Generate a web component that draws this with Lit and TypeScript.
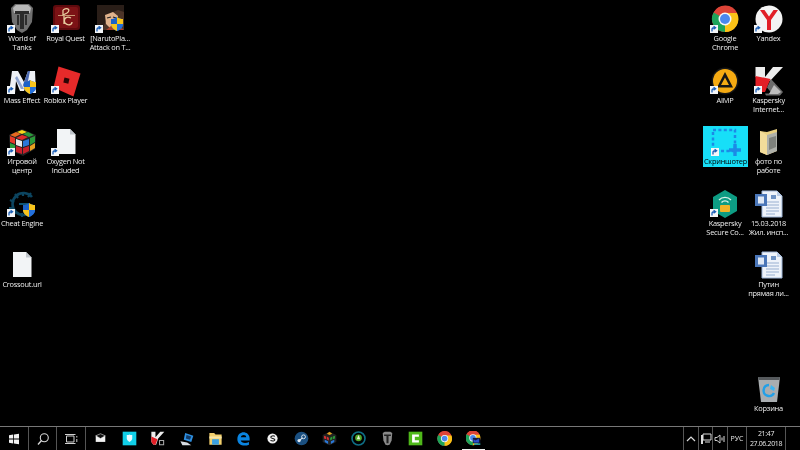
import { LitElement, html, css, svg } from "lit";
import { customElement } from "lit/decorators.js";

const shield = (x: number, y: number, s = 1) => svg`<g transform="translate(${x} ${y}) scale(${s})">
  <path d="M6 0C4 1.600 2 2 0 2v5c0 3.400 2.600 5.600 6 7 3.400-1.400 6-3.600 6-7V2c-2 0-4-.4-6-2z" fill="#1c62c8"/>
  <path d="M6 0c2 1.600 4 2 6 2v5H6z" fill="#f8c41c"/><path d="M6 7H0c0 3.400 2.600 5.600 6 7z" fill="#f8c41c"/>
  <path d="M6 7h6c0 3.400-2.600 5.600-6 7z" fill="#2470dc"/></g>`;

const wot = svg`<path d="M5 5 9 1h14l4 4-1 14-5 8-5 3-5-3-5-8z" fill="#6f6f6f"/><path d="M7 5l3-3h12l3 3-1 5H8z" fill="#b8b8b8"/>
  <path d="M9 8h14v3h-5v15h-4V11H9z" fill="#2a2a2a"/><path d="M11 12h2v10h-2zM19 12h2v10h-2z" fill="#2c2c2c"/>`;
const royal = svg`<rect x="3" y="2" width="27" height="25" rx="3" fill="#5e0a0d"/><rect x="5" y="4" width="23" height="21" rx="2" fill="#7c1215"/>
  <path d="M13 7c5-3 8 0 4 3l-4 2V7M14 13v8M21 15c-4-2-8 0-6 5 3 3 7 2 7-1" fill="none" stroke="#e8cda0" stroke-width="1.300"/><path d="M8 12.500h17" stroke="#d8b888" stroke-width=".8"/>`;
const naruto = svg`<rect x="3" y="2" width="27" height="25" fill="#4c3428"/><path d="M3 2h27v7l-6-2-7 3-6 10-3 7H3z" fill="#2a1e18"/>
  <path d="M11 12l8-3 5 4-1 8-6 5-5-5z" fill="#e0b28c"/><path d="M13 15l4-1M19 14l3 1" stroke="#222" stroke-width="1.200"/><path d="M17 23l6-2 7 6H12z" fill="#a8402a"/>${shield(17, 14)}`;
const mass = svg`<path d="M3 28 6 6h6l6 11 4-11h7l1 22h-7l-1-11-4 9h-4L10 16 9 28z" fill="#eef1f6"/><path d="M17 20l5-14h2l-3 15-2 4z" fill="#4a68b0"/><path d="M9 13l6 11h3l-7-13z" fill="#8ea4d0"/>${shield(18, 15)}`;
const roblox = svg`<path d="M8.500 1.400 30.500 8.400 23.500 31.400 3.500 22.400z" fill="#e62a2a"/><path d="M14.500 12.500l5 1.200-1.200 5-5-1.200z" fill="#2a0505"/>`;
const cube = svg`<path d="M16 3 30 9l-1 14-12 7-13-6L3 9z" fill="#222"/>
  <path d="M16 4l5 2-5 2-5-2z" fill="#f8d81c"/><path d="M10 6l-6 3 5 2 6-3z" fill="#e86a20"/><path d="M22 6l6 3-5 2-6-3z" fill="#2a9a3a"/>
  <path d="M16 9l6 2-6 3-6-2z" fill="#e02a2a"/><path d="M4 10l5 2v6l-5-2z" fill="#e83a2a"/><path d="M10 13l6 2v6l-6-2z" fill="#e8e8e8"/><path d="M17 15l6-2v6l-6 2z" fill="#2a78d8"/><path d="M24 12l5-2v6l-5 3z" fill="#2a9a3a"/>
  <path d="M4 17l5 2v6l-5-3z" fill="#2a9a3a"/><path d="M10 20l6 2v6l-6-2z" fill="#c8202a"/><path d="M17 22l6-2v5l-6 3z" fill="#c8202a"/><path d="M24 20l5-3v5l-5 3z" fill="#e8a020"/>`;
const page = svg`<path d="M7 3h13l5.500 5.500V28H7z" fill="#f2f4f6"/><path d="M20 3l5.500 5.500H20z" fill="#bfc5cb"/>`;
const cheat = svg`<path d="M26 9a11 11 0 1 0 0 14" fill="none" stroke="#0c4560" stroke-width="2.600"/><path d="M17 4v4M9 6l3 4M4 12l4 2M3 20h5M7 27l3-3M16 29v-4M25 5l-3 4" stroke="#0c4560" stroke-width="2.200"/><path d="M13 16h10" stroke="#115f80" stroke-width="1.800"/>${shield(17, 15)}`;
const chrome = svg`<circle cx="16" cy="16" r="13" fill="#dd4437"/><path d="M16 16 4.700 9.500A13 13 0 0 0 16 29l3-6z" fill="#1da45a"/><path d="M16 16 16 29A13 13 0 0 0 28 10H16z" fill="#fbc217"/><path d="M4.700 9.500A13 13 0 0 1 28 10H16z" fill="#dd4437"/><circle cx="16" cy="16" r="6.500" fill="#f4f6f8"/><circle cx="16" cy="16" r="5" fill="#4a88ee"/>`;
const yandex = svg`<circle cx="16" cy="16" r="13.500" fill="#f3f3f3"/><path d="M7 7l7 10v10h4V17l7-10h-4.500L16 13.500 11.500 7z" fill="#e11e26"/>`;
const aimp = svg`<circle cx="16" cy="16" r="13.500" fill="#161616"/><circle cx="16" cy="16" r="12" fill="#f5aa12"/><path d="M16 7l8 15.500H8zM16 12.500l-4 7.500h8z" fill="#151515" fill-rule="evenodd"/>`;
const kasp = svg`<path d="M2.500 2H12v10l8-10h10L17 16l-5 0-9.500-4z" fill="#ececec"/><path d="M2.500 11l15 3-5.500 13H6.500l-4-5z" fill="#e31f26"/><path d="M18 14l12 13-3 3.500H13l-1-2h7l-5-6z" fill="#6c6c6c"/><path d="M21 20l7 7-3 2H16z" fill="#bdbdbd"/>`;
const shot = svg`<rect x="3" y="4" width="22" height="21" fill="none" stroke="#1c8ae6" stroke-width="2.500" stroke-dasharray="3 2.400"/><path d="M25 18v12M19 24h12" stroke="#1c8ae6" stroke-width="3.400"/>`;
const folder = svg`<path d="M7 5l7 1 10-3v22l-10 4-7-3z" fill="#e8cf82"/><path d="M14 9l10-3v19l-10 4z" fill="#aeb0aa"/><path d="M16 12l7-2v11l-7 3z" fill="#7e817c"/><path d="M7 5l7 4v20l-7-3z" fill="#f2dc9a"/>`;
const kss = svg`<path d="M16 2 28 9v14l-12 7-12-7V9z" fill="#0d9c83"/><path d="M10 12a8 8 0 0 1 12 0M12.500 14.500a4.500 4.500 0 0 1 7 0" fill="none" stroke="#d8f2ea" stroke-width="1.300"/><rect x="11" y="17" width="10" height="7" rx="1" fill="#f0b428"/>`;
const word = svg`<path d="M9 3h15l5 5v21H9z" fill="#eef3fa" stroke="#9db4d6"/><path d="M24 3l5 5h-5z" fill="#b9cbe4"/><path d="M13 14h13M13 17h13M13 20h13M13 23h13M13 26h9" stroke="#98afd0"/><rect x="18" y="7" width="5" height="4" fill="#6f93c4"/><rect x="2" y="6" width="12" height="12" fill="#4a76b8"/><rect x="5" y="8.500" width="6" height="7" fill="#dfe8f5"/>`;
const bin = svg`<path d="M5 4h22l-3 25H8z" fill="#a9adb0"/><path d="M5 4h22l-.6 3H5.600z" fill="#55595c"/><path d="M16 12a5.500 5.500 0 1 0 5 8" fill="none" stroke="#22a0e8" stroke-width="2.400"/><path d="M18 12l4 3-1 3-4-2z" fill="#3cb4f0"/>`;

type Item = { c: number; r: number; t: string[]; i: unknown; link?: boolean; sel?: boolean };
const COLS = [0, 43.5, 88, 703, 746.5];
const ITEMS: Item[] = [
  { c: 0, r: 0, t: ["World of", "Tanks"], i: wot, link: true },
  { c: 1, r: 0, t: ["Royal Quest"], i: royal, link: true },
  { c: 2, r: 0, t: ["[NarutoPla...", "Attack on T..."], i: naruto, link: true },
  { c: 0, r: 1, t: ["Mass Effect"], i: mass, link: true },
  { c: 1, r: 1, t: ["Roblox Player"], i: roblox, link: true },
  { c: 0, r: 2, t: ["Игровой", "центр"], i: cube, link: true },
  { c: 1, r: 2, t: ["Oxygen Not", "Included"], i: page, link: true },
  { c: 0, r: 3, t: ["Cheat Engine"], i: cheat, link: true },
  { c: 0, r: 4, t: ["Crossout.url"], i: page },
  { c: 3, r: 0, t: ["Google", "Chrome"], i: chrome, link: true },
  { c: 4, r: 0, t: ["Yandex"], i: yandex, link: true },
  { c: 3, r: 1, t: ["AIMP"], i: aimp, link: true },
  { c: 4, r: 1, t: ["Kaspersky", "Internet..."], i: kasp, link: true },
  { c: 3, r: 2, t: ["Скриншотер"], i: shot, link: true, sel: true },
  { c: 4, r: 2, t: ["фото по", "работе"], i: folder },
  { c: 3, r: 3, t: ["Kaspersky", "Secure Co..."], i: kss, link: true },
  { c: 4, r: 3, t: ["15.03.2018", "Жил. инсп..."], i: word },
  { c: 4, r: 4, t: ["Путин", "прямая ли..."], i: word },
  { c: 4, r: 6, t: ["Корзина"], i: bin },
];

const arrow = svg`<rect x="0" y="0" width="8" height="8" fill="#f4f6f8"/><path d="M2 6.500V4.200C2 3 3 2.700 4.600 2.700M3.600 1.200 5.600 2.700 3.600 4.200" fill="none" stroke="#1c5fb8" stroke-width="1.300"/>`;

const TASK: unknown[] = [
  svg`<path d="M4 7h14v9H4z" fill="#f2f2f2"/><path d="M4 7l7-3 7 3-7 4z" fill="#111" stroke="#f2f2f2" stroke-width=".8"/>`,
  svg`<rect x="1" y="1" width="20" height="20" fill="#10cfe8"/><path d="M11 5c2 1 3 1 4 1v5c0 2-2 4-4 5-2-1-4-3-4-5V6c1 0 2 0 4-1z" fill="#e8fbff"/>`,
  svg`<path d="M2 1h6v8l7-8h6l-9 10-3 9H5l-3-4z" fill="#ececec"/><path d="M2 8l9 4-3 8H5l-3-4z" fill="#e31f26"/><path d="M14 14h6v6h-6z" fill="none" stroke="#aaa" stroke-width="1.500"/>`,
  svg`<path d="M9 3l12 4-3 9-11-3z" fill="#2e8fe0"/><path d="M2 15l10 2 6 4H5z" fill="#d8dde2"/><path d="M11 6l7 2-2 5-6-2z" fill="#123a66"/>`,
  svg`<path d="M2 3h7l2 2h9v15H2z" fill="#f2cf6c"/><path d="M2 8h18v3H2z" fill="#f8e6a8"/><rect x="6" y="12" width="10" height="8" fill="#3aa0e0"/>`,
  svg`<path d="M2 12c0-7 5-10 9-10s9 3 9 9v3H7c.5 4 8 4.500 12 2v4c-7 3-17 1-17-8zm5-3h8c0-4-7-4-8 0z" fill="#0a84e0"/>`,
  svg`<circle cx="11" cy="11" r="7.500" fill="#f2f2f2"/><path d="M14.500 8c-2-1.500-6-1-6 1 0 2.500 6 1.500 6 4 0 2-3.500 2-6.500 1" fill="none" stroke="#111" stroke-width="1.500"/>`,
  svg`<circle cx="11" cy="11" r="10" fill="#1a4f80"/><circle cx="14" cy="8.500" r="2.800" fill="none" stroke="#e8eef4" stroke-width="1.300"/><circle cx="7.500" cy="14" r="2.400" fill="#e8eef4"/><path d="M7.500 14l5-4" stroke="#e8eef4" stroke-width="1.500"/>`,
  svg`<path d="M11 1 21 6v10l-10 5-10-5V6z" fill="#222"/><path d="M11 1 15 4l-4 2-4-2z" fill="#e0a020"/><path d="M3 7l3 1v4l-3-1zM7 8l3 2v4L7 12z" fill="#d83030"/><path d="M12 10l3-2v4l-3 2zM16 8l3-1v4l-3 1z" fill="#2a9a3a"/><path d="M4 13l5 2v4l-5-3zM13 15l5-2v3l-5 3z" fill="#2a78d8"/>`,
  svg`<circle cx="11" cy="11" r="9.500" fill="none" stroke="#0e6f86" stroke-width="2.400"/><circle cx="11" cy="10" r="5" fill="#52a828"/><path d="M11 6l2.500 6h-5z" fill="#e8f4d8"/>`,
  svg`<path d="M4 3 7 1h8l3 2-1 11-3 6-3 1-3-1-3-6z" fill="#8a8a8a"/><path d="M6 5h10v2.500h-3.500V18h-3V7.500H6z" fill="#222"/>`,
  svg`<rect x="1" y="1" width="20" height="20" fill="#4fb81a"/><path d="M6 5h10v3.500H10v5h6V17H6z" fill="#fff"/>`,
  svg`<g transform="translate(-2 -2) scale(.82)">${chrome}</g>`,
  svg`<g transform="translate(-3 -3) scale(.82)">${chrome}</g><rect x="10" y="10" width="11" height="8" fill="#141a3a"/><path d="M11 12l3 2 5-3v6h-8z" fill="#2a50d0"/><rect x="12" y="18" width="9" height="2.500" fill="#2a9aa0"/>`,
];

@customElement("app-root")
export class AppRoot extends LitElement {
  static styles = css`
    :host { display: block; width: 800px; height: 450px; background: #000; overflow: hidden; }
    .screen { width: 800px; height: 450px; display: flex; flex-direction: column; font-family: "Open Sans", "Noto Sans", sans-serif; color: #eee; }
    .desktop { position: relative; flex: 1; }
    .cell { position: absolute; width: 44px; display: flex; flex-direction: column; align-items: center; }
    .cell.sel { background: #17dff8; color: #000; height: 41px; width: 45px; margin-top: 1px; }
    .ico { position: relative; width: 32px; height: 31px; flex: none; filter: blur(0.3px); }
    .ico svg { display: block; }
    .arrow { position: absolute; left: 1px; top: 21.500px; width: 8px; height: 8px; }
    .label { font-size: 7.400px; line-height: 9px; letter-spacing: -0.25px; text-align: center; white-space: nowrap; filter: blur(0.25px); }
    .bar { height: 23px; flex: none; display: flex; align-items: stretch; background: #000; border-top: 1px solid #777; }
    .btn { box-sizing: border-box; width: 28.700px; display: flex; align-items: center; justify-content: center; flex: none; position: relative; filter: blur(0.2px); }
    .sep { border-right: 1px solid #555; }
    .btn.active::after { content: ""; position: absolute; left: 3px; right: 3px; bottom: 0; height: 1.500px; background: #f2f2f2; }
    .spacer { flex: 1; }
    .tray { display: flex; align-items: center; justify-content: center; border-left: 1px solid #555; color: #e8e8e8; font-size: 7px; filter: blur(0.2px); }
    .t-up { width: 14px; } .t-net { width: 13px; } .t-vol { width: 14px; } .t-lang { width: 18px; }
    .clock { width: 38px; flex-direction: column; line-height: 10px; letter-spacing: -0.35px; }
    .t-end { width: 14px; }
  `;

  render() {
    return html`<div class="screen">
      <div class="desktop">
        ${ITEMS.map(
          (it) => html`<div class="cell ${it.sel ? "sel" : ""}" style="left:${COLS[it.c]}px;top:${it.sel ? 125 : 3 + 61.6 * it.r}px">
            <div class="ico">
              <svg width="32" height="32" viewBox="0 0 32 32">${it.i}</svg>
              ${it.link ? html`<svg class="arrow" viewBox="0 0 8 8">${arrow}</svg>` : ""}
            </div>
            <div class="label">${it.t.map((l) => html`<div>${l}</div>`)}</div>
          </div>`
        )}
      </div>
      <div class="bar">
        <div class="btn sep"><svg width="14" height="14" viewBox="0 0 14 14"><path d="M2 3.200 6.200 2.500V6.600H2zM7 2.400 12 1.700V6.600H7zM2 7.400H6.200V11.500L2 10.800zM7 7.400H12V12.300L7 11.600z" fill="#f2f2f2"/></svg></div>
        <div class="btn sep"><svg width="14" height="14" viewBox="0 0 14 14"><circle cx="8.300" cy="5.700" r="4" fill="none" stroke="#d8d8d8" stroke-width="1.100"/><path d="M5.500 8.500 2 12.500" stroke="#d8d8d8" stroke-width="1.300"/></svg></div>
        <div class="btn sep"><svg width="14" height="14" viewBox="0 0 14 14"><path d="M2.500 4H10V10H2.500zM1 2.500H11.500M1 11.500H11.500" fill="none" stroke="#d0d0d0"/><path d="M12.800 4v1.500M12.800 7v3" stroke="#d0d0d0"/></svg></div>
        ${TASK.map(
          (g, i) => html`<div class="btn ${i === TASK.length - 1 ? "active" : ""}"><svg width="15" height="15" viewBox="0 0 22 22">${g}</svg></div>`
        )}
        <div class="spacer"></div>
        <div class="tray t-up"><svg width="10" height="8" viewBox="0 0 10 8"><path d="M1 6 5 2l4 4" fill="none" stroke="#ddd" stroke-width="1.200"/></svg></div>
        <div class="tray t-net"><svg width="12" height="11" viewBox="0 0 12 11"><path d="M3 1h8v6H3zM5 9h5" fill="none" stroke="#ddd"/><path d="M1 2h2v9H1z" fill="#ddd"/></svg></div>
        <div class="tray t-vol"><svg width="12" height="10" viewBox="0 0 12 10"><path d="M1 3.500h2L6 1v8L3 6.500H1z" fill="none" stroke="#ddd" stroke-width=".9"/><path d="M8 3.500v3M10 2v6" stroke="#ddd"/></svg></div>
        <div class="tray t-lang">РУС</div>
        <div class="tray clock"><div>21:47</div><div>27.06.2018</div></div>
        <div class="tray t-end"></div>
      </div>
    </div>`;
  }
}
